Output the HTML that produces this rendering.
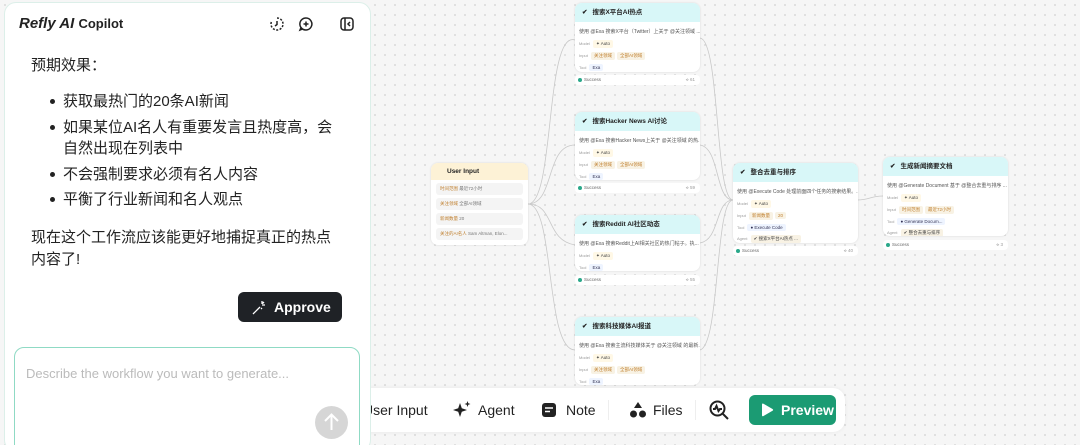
<!DOCTYPE html>
<html><head><meta charset="utf-8">
<style>
*{box-sizing:border-box;margin:0;padding:0}
html,body{width:1080px;height:445px;overflow:hidden}
body{position:relative;font-family:"Liberation Sans","Noto Sans CJK SC",sans-serif;background:#f6f6f6;background-image:radial-gradient(#d8d8d8 0.8px,transparent 0.9px);background-size:10px 10px;}
#panel{position:absolute;left:4px;top:2px;width:367px;height:450px;background:#fff;border:1px solid #dcefe9;border-radius:12px;z-index:5}
.logo{position:absolute;left:14px;top:12px;font-size:15px;font-weight:bold;color:#222}
.logo span{font-size:13px}
.ic{position:absolute;top:13px;width:16px;height:16px}
.txt{position:absolute;left:26px;color:#222;font-size:15px}
.li{position:absolute;left:58px;font-size:15px;color:#222;line-height:21px}
.li:before{content:"";position:absolute;left:-13px;top:8px;width:5px;height:5px;border-radius:50%;background:#222}
#approve{position:absolute;left:233px;top:289px;width:104px;height:30px;background:#1f2226;border-radius:6px;color:#fff;font-weight:bold;font-size:14px;line-height:30px;padding-left:36px}
#input{position:absolute;left:9px;top:344px;width:346px;height:110px;border:1.5px solid #8fdac4;border-radius:10px;background:#fff}
#input .ph{position:absolute;left:11px;top:18px;color:#bbb;font-size:13px}
#send{position:absolute;left:300px;top:58px;width:33px;height:33px;border-radius:50%;background:#d6d6d6}
.node{position:absolute;width:125px;background:#fff;border-radius:7px;box-shadow:0 0 2px rgba(0,0,0,.12);font-size:5px;color:#555;overflow:hidden}
.node .h{height:19px;background:#d8f7f8;font-size:6.5px;color:#222;font-weight:bold;line-height:19px;padding-left:7px}
.node .h b{margin-right:5px}
.node .d{padding:6px 4px 3px;white-space:nowrap}
.node .r{padding:2px 4px;white-space:nowrap;color:#999;font-size:4px}
.tg{display:inline-block;padding:1px 3px;border-radius:2px;background:#f8f2e4;color:#c08030;font-size:4.5px;margin-left:2px}
.tb{display:inline-block;padding:1px 3px;border-radius:2px;background:#eef4ff;color:#335;font-size:4.5px;margin-left:2px}
.ft{position:absolute;width:125px;height:10px;background:#fff;border-radius:4px;font-size:4.5px;color:#666;line-height:10px;padding-left:9px}
.ft:before{content:"";position:absolute;left:3px;top:3px;width:4px;height:4px;border-radius:50%;background:#2aa88a}
.ft span{position:absolute;right:5px;color:#999}
#ui{position:absolute;left:431px;top:163px;width:97px;height:82px;background:#fff;border-radius:7px;box-shadow:0 0 2px rgba(0,0,0,.12);overflow:hidden}
#ui .h{height:17px;background:#fdf2d6;font-size:6.5px;font-weight:bold;line-height:17px;padding-left:16px;color:#222}
#ui .f{margin:3px 5px 0;height:12px;background:#f4f4f4;border-radius:3px;font-size:4.5px;color:#c08030;line-height:12px;padding-left:4px;white-space:nowrap;overflow:hidden}
#ui .f span{color:#777}
#tool{position:absolute;left:343px;top:388px;width:502px;height:44px;background:#fff;border-radius:12px;box-shadow:0 0 4px rgba(0,0,0,.06)}
.tt{position:absolute;top:14px;font-size:14px;color:#222}
#prev{position:absolute;left:406px;top:7px;width:87px;height:30px;background:#1b9b73;border-radius:6px;color:#fff;font-size:14px;font-weight:bold;line-height:30px;padding-left:32px}
</style></head><body>
<svg style="position:absolute;left:0;top:0" width="1080" height="445" fill="none" stroke="#c8c8c8" stroke-width="0.8">
<path d="M528 204 C555 204,545 30,575 40"/>
<path d="M528 204 C555 204,545 145,575 145"/>
<path d="M528 204 C555 204,545 240,575 245"/>
<path d="M528 204 C555 204,545 350,575 350"/>
<path d="M700 38 C720 40,715 200,733 200"/>
<path d="M700 145 C720 148,715 200,733 200"/>
<path d="M700 243 C720 240,715 200,733 200"/>
<path d="M700 350 C720 345,715 200,733 200"/>
<path d="M857 200 C870 200,870 196,883 196"/>
</svg>

<div class="node" style="left:575px;top:3px;height:69px"><div class="h"><b>✔</b>搜索X平台AI热点</div><div class="d">使用 @Exa 搜索X平台（Twitter）上关于 @关注领域 ...</div><div class="r">Model <span class="tb" style="background:#fff8e6;color:#444">✦ Auto</span></div><div class="r">Input <span class="tg">关注领域</span><span class="tg">全部AI领域</span></div><div class="r">Tool <span class="tb">Exa</span></div></div>
<div class="ft" style="left:575px;top:75px">Success<span>⟡ 61</span></div>

<div class="node" style="left:575px;top:112px;height:68px"><div class="h"><b>✔</b>搜索Hacker News AI讨论</div><div class="d">使用 @Exa 搜索Hacker News上关于 @关注领域 的热...</div><div class="r">Model <span class="tb" style="background:#fff8e6;color:#444">✦ Auto</span></div><div class="r">Input <span class="tg">关注领域</span><span class="tg">全部AI领域</span></div><div class="r">Tool <span class="tb">Exa</span></div></div>
<div class="ft" style="left:575px;top:183px">Success<span>⟡ 59</span></div>

<div class="node" style="left:575px;top:215px;height:56px"><div class="h"><b>✔</b>搜索Reddit AI社区动态</div><div class="d">使用 @Exa 搜索Reddit上AI相关社区的热门帖子。执...</div><div class="r">Model <span class="tb" style="background:#fff8e6;color:#444">✦ Auto</span></div><div class="r">Tool <span class="tb">Exa</span></div></div>
<div class="ft" style="left:575px;top:275px">Success<span>⟡ 55</span></div>

<div class="node" style="left:575px;top:317px;height:68px"><div class="h"><b>✔</b>搜索科技媒体AI报道</div><div class="d">使用 @Exa 搜索主流科技媒体关于 @关注领域 的最新...</div><div class="r">Model <span class="tb" style="background:#fff8e6;color:#444">✦ Auto</span></div><div class="r">Input <span class="tg">关注领域</span><span class="tg">全部AI领域</span></div><div class="r">Tool <span class="tb">Exa</span></div></div>

<div class="node" style="left:733px;top:163px;height:80px"><div class="h"><b>✔</b>整合去重与排序</div><div class="d">使用 @Execute Code 处理前面四个任务的搜索结果。...</div><div class="r">Model <span class="tb" style="background:#fff8e6;color:#444">✦ Auto</span></div><div class="r">Input <span class="tg">新闻数量</span><span class="tg">20</span></div><div class="r">Tool <span class="tb">● Execute Code</span></div><div class="r">Agent <span class="tg" style="color:#444">✔ 搜索X平台AI热点 ...</span></div></div>
<div class="ft" style="left:733px;top:246px">Success<span>⟡ 40</span></div>

<div class="node" style="left:883px;top:157px;height:79px"><div class="h"><b>✔</b>生成新闻摘要文档</div><div class="d">使用 @Generate Document 基于 @整合去重与排序 ...</div><div class="r">Model <span class="tb" style="background:#fff8e6;color:#444">✦ Auto</span></div><div class="r">Input <span class="tg">时间范围</span><span class="tg">最近72小时</span></div><div class="r">Tool <span class="tb">● Generate Docum...</span></div><div class="r">Agent <span class="tg" style="color:#444">✔ 整合去重与排序</span></div></div>
<div class="ft" style="left:883px;top:240px">Success<span>⟡ 3</span></div>

<div id="ui"><div class="h">User Input</div>
<div class="f">时间范围 <span>最近72小时</span></div>
<div class="f">关注领域 <span>全部AI领域</span></div>
<div class="f">新闻数量 <span>20</span></div>
<div class="f">关注的AI名人 <span>Sam Altman, Elon...</span></div>
</div>

<div id="tool">
<div class="tt" style="left:20px">User Input</div>
<svg style="position:absolute;left:109px;top:12px" width="20" height="20" viewBox="0 0 20 20" fill="#222"><path d="M8 3l1.8 5.2L15 10l-5.2 1.8L8 17l-1.8-5.2L1 10l5.2-1.8z"/><path d="M15.5 1l.8 2.2 2.2.8-2.2.8-.8 2.2-.8-2.2-2.2-.8 2.2-.8z"/></svg>
<div class="tt" style="left:135px">Agent</div>
<svg style="position:absolute;left:198px;top:14px" width="16" height="16" viewBox="0 0 16 16"><rect x="1" y="1" width="14" height="14" rx="3" fill="#222"/><path d="M4 6h8M4 9.5h5" stroke="#fff" stroke-width="1.6"/></svg>
<div class="tt" style="left:223px">Note</div>
<div style="position:absolute;left:265px;top:12px;width:1px;height:20px;background:#eee"></div>
<svg style="position:absolute;left:286px;top:13px" width="18" height="18" viewBox="0 0 18 18" fill="#222"><path d="M9 1l4 6H5z"/><circle cx="4.5" cy="13" r="3.5"/><circle cx="13.5" cy="13" r="3.5"/></svg>
<div class="tt" style="left:310px">Files</div>
<div style="position:absolute;left:352px;top:12px;width:1px;height:20px;background:#eee"></div>
<svg style="position:absolute;left:365px;top:11px" width="22" height="22" viewBox="0 0 22 22" fill="none" stroke="#222" stroke-width="2"><circle cx="9.5" cy="9.5" r="7"/><path d="M15 15l5 5M5 10h2l1.5-3 2 5 1.5-2h2"/></svg>
<div id="prev"><svg style="position:absolute;left:11px;top:8px" width="14" height="14" viewBox="0 0 14 14"><path d="M2 1.5q0-1.5 1.5-.7l9 5.2q1.3.9 0 1.8l-9 5.2Q2 13.8 2 12.3z" fill="#fff"/></svg>Preview</div>
</div>

<div id="panel">
<div class="logo"><i>Refly AI</i> <span>Copilot</span></div>
<svg class="ic" style="left:264px" viewBox="0 0 16 16" fill="none" stroke="#222" stroke-width="1.5"><path d="M8 2a6 6 0 1 1-5.5 3.6" stroke-dasharray="2 1.5"/><path d="M8 5v3.5l-2 1.5"/></svg>
<svg class="ic" style="left:293px" viewBox="0 0 16 16" fill="none" stroke="#222" stroke-width="1.5"><path d="M8 2a6 6 0 1 1-5 9.5L2 14l2.5-1A6 6 0 0 1 8 2z"/><path d="M8 5.5v5M5.5 8h5"/></svg>
<svg class="ic" style="left:334px" viewBox="0 0 16 16" fill="none" stroke="#222" stroke-width="1.5"><rect x="2" y="2" width="12" height="12" rx="3"/><path d="M6 2v12M11 6l-2 2 2 2"/></svg>
<div class="txt" style="top:51px">预期效果：</div>
<div class="li" style="top:88px">获取最热门的20条AI新闻</div>
<div class="li" style="top:114px">如果某位AI名人有重要发言且热度高，会<br>自然出现在列表中</div>
<div class="li" style="top:161px">不会强制要求必须有名人内容</div>
<div class="li" style="top:186px">平衡了行业新闻和名人观点</div>
<div class="txt" style="top:224px;line-height:22px">现在这个工作流应该能更好地捕捉真正的热点<br>内容了!</div>
<div id="approve"><svg style="position:absolute;left:14px;top:8px" width="15" height="15" viewBox="0 0 15 15" fill="none" stroke="#fff" stroke-width="1.3"><path d="M1 14L8 7M10 1v3M13 5h-3M12 2l-1.5 1.5M9 8l1 1"/></svg>Approve</div>
<div id="input"><div class="ph">Describe the workflow you want to generate...</div><div id="send"><svg width="33" height="33" viewBox="0 0 33 33" fill="none" stroke="#fff" stroke-width="2"><path d="M16.5 24V9M10 15l6.5-6.5L23 15"/></svg></div></div>
</div>
</body></html>
